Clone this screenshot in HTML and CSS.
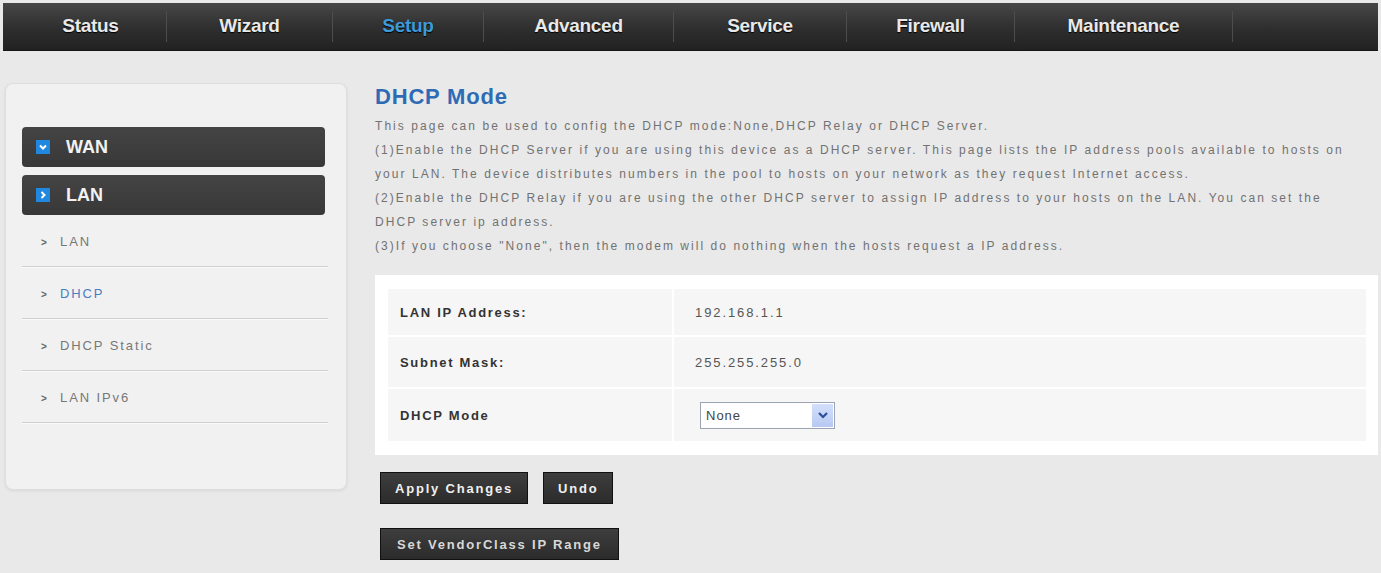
FILE: index.html
```html
<!DOCTYPE html>
<html lang="en">
<head>
    <meta charset="UTF-8">
    <meta name="viewport" content="width=device-width, initial-scale=1.0">
    <title>DHCP Mode</title>
    <link rel="stylesheet" href="styles.css">
</head>
<body>

    <!-- Main menu -->
    <div class="topnav">
        <a class="nav-item">Status</a>
        <a class="nav-item">Wizard</a>
        <a class="nav-item active">Setup</a>
        <a class="nav-item">Advanced</a>
        <a class="nav-item">Service</a>
        <a class="nav-item">Firewall</a>
        <a class="nav-item">Maintenance</a>
    </div>

    <div class="main">

        <!-- Left menu -->
        <div class="sidebar">
            <div class="group-btn">
                <span class="group-icon">
                    <svg width="14" height="14" viewBox="0 0 14 14"><path d="M4 5.5 L7 8.5 L10 5.5" fill="none" stroke="#fff" stroke-width="2"/></svg>
                </span>
                WAN
            </div>
            <div class="group-btn">
                <span class="group-icon">
                    <svg width="14" height="14" viewBox="0 0 14 14"><path d="M5.5 4 L8.5 7 L5.5 10" fill="none" stroke="#fff" stroke-width="2"/></svg>
                </span>
                LAN
            </div>
            <ul class="sub-menu">
                <li><span class="arrow">&gt;</span>LAN</li>
                <li class="current"><span class="arrow">&gt;</span>DHCP</li>
                <li><span class="arrow">&gt;</span>DHCP Static</li>
                <li><span class="arrow">&gt;</span>LAN IPv6</li>
            </ul>
        </div>

        <!-- Page content -->
        <div class="content">
            <h2>DHCP Mode</h2>
            <div class="intro">
                <div>This page can be used to config the DHCP mode:None,DHCP Relay or DHCP Server.</div>
                <div>(1)Enable the DHCP Server if you are using this device as a DHCP server. This page lists the IP address pools available to hosts on your LAN. The device distributes numbers in the pool to hosts on your network as they request Internet access.</div>
                <div>(2)Enable the DHCP Relay if you are using the other DHCP server to assign IP address to your hosts on the LAN. You can set the DHCP server ip address.</div>
                <div>(3)If you choose "None", then the modem will do nothing when the hosts request a IP address.</div>
            </div>

            <div class="form-box">
                <div class="form-table">
                    <div class="cell label">LAN IP Address:</div>
                    <div class="cell value">192.168.1.1</div>
                    <div class="cell label">Subnet Mask:</div>
                    <div class="cell value">255.255.255.0</div>
                    <div class="cell label">DHCP Mode</div>
                    <div class="cell value">
                        <div class="select">
                            <span class="select-text">None</span>
                            <span class="select-btn">
                                <svg width="12" height="10" viewBox="0 0 12 10"><path d="M2 3 L6 7 L10 3" fill="none" stroke="#2b4f9a" stroke-width="2.2"/></svg>
                            </span>
                        </div>
                    </div>
                </div>
            </div>

            <div class="btn-row">
                <button class="btn">Apply Changes</button>
                <button class="btn">Undo</button>
            </div>
            <div class="btn-row second">
                <button class="btn light">Set VendorClass IP Range</button>
            </div>
        </div>
    </div>

</body>
</html>
```

FILE: styles.css
```css
/* General styling */
body {
    margin: 0;
    background-color: #e9e9e9;
    font-family: "Liberation Sans", Arial, sans-serif;
    color: #333;
}

/* Main menu */
.topnav {
    display: grid;
    grid-template-columns: 152px 166px 151px 190px 173px 168px 218px;
    height: 48px;
    margin: 3px 3px 0;
    padding-left: 12px;
    background: linear-gradient(#474747, #2e2e2e 55%, #222);
    border-bottom: 1px solid #161616;
    box-sizing: border-box;
}
.nav-item {
    margin: 8px 0;
    line-height: 30px;
    text-align: center;
    border-right: 1px solid #4d4d4d;
    font-weight: bold;
    font-size: 19px;
    letter-spacing: -0.3px;
    color: #e9e9e9;
    text-shadow: 0 1px 1px #000;
    cursor: pointer;
}
.nav-item.active {
    color: #3d9ad8;
}

.main {
    display: flex;
    padding: 32px 3px 0 5px;
}

/* Left menu */
.sidebar {
    width: 342px;
    height: 407px;
    box-sizing: border-box;
    padding: 43px 18px 0 16px;
    background-color: #f1f1f1;
    border: 1px solid #dedede;
    border-radius: 8px;
    box-shadow: 0 1px 3px rgba(0, 0, 0, 0.08);
}
.group-btn {
    display: flex;
    align-items: center;
    height: 40px;
    margin: 0 3px 8px 0;
    padding-left: 14px;
    background: linear-gradient(#444, #383838);
    border-radius: 4px;
    font-weight: bold;
    font-size: 18px;
    color: #f2f2f2;
}
.group-icon {
    display: flex;
    width: 14px;
    height: 14px;
    margin-right: 16px;
    background-color: #2188df;
}
.sub-menu {
    list-style: none;
    margin: -8px 0 0;
    padding: 0;
}
.sub-menu li {
    height: 49px;
    padding-top: 2px;
    line-height: 49px;
    border-bottom: 1px solid #cfcfcf;
    box-shadow: 0 1px 0 #fafafa;
    font-size: 13px;
    letter-spacing: 1.9px;
    color: #777;
}
.sub-menu li.current {
    color: #4a7cc2;
}
.arrow {
    display: inline-block;
    width: 19px;
    padding-left: 19px;
    font-size: 10px;
    font-weight: bold;
    color: #666;
}

/* Page content */
.content {
    flex: 1;
    margin-left: 28px;
    padding-top: 1px;
}
h2 {
    margin: 0;
    line-height: 26px;
    font-size: 22px;
    letter-spacing: 0.8px;
    color: #2d6cb5;
}
.intro {
    max-width: 983px;
    margin-top: 4px;
    font-size: 12px;
    line-height: 24px;
    letter-spacing: 2.05px;
    color: #727272;
}

/* Settings table */
.form-box {
    margin-top: 17px;
    padding: 14px 12px 14px 13px;
    background-color: #fff;
}
.form-table {
    display: grid;
    grid-template-columns: 284px 1fr;
    grid-template-rows: 46px 50px 52px;
    gap: 2px;
}
.cell {
    display: flex;
    align-items: center;
    background-color: #f6f6f6;
}
.label {
    padding-left: 12px;
    font-weight: bold;
    font-size: 13px;
    letter-spacing: 1.7px;
    color: #333;
}
.value {
    padding-left: 21px;
    font-size: 13px;
    letter-spacing: 1.9px;
    color: #555;
}
.select {
    display: flex;
    align-items: center;
    justify-content: space-between;
    width: 135px;
    height: 27px;
    margin-left: 5px;
    border: 1px solid #9aa4b3;
    background-color: #fff;
    box-sizing: border-box;
    letter-spacing: 1px;
}
.select-text {
    padding-left: 5px;
    color: #444;
}
.select-btn {
    display: flex;
    align-items: center;
    justify-content: center;
    width: 21px;
    height: 23px;
    margin-right: 1px;
    background: linear-gradient(#d3dffb, #b7c9f3);
}

/* Buttons */
.btn-row {
    display: flex;
    gap: 15px;
    margin: 17px 0 0 5px;
}
.btn-row.second {
    margin-top: 24px;
}
.btn {
    height: 32px;
    padding: 0 14px;
    background: linear-gradient(#3e3e3e, #2b2b2b);
    border: 1px solid #111;
    font-family: "Liberation Sans", Arial, sans-serif;
    font-weight: bold;
    font-size: 13px;
    letter-spacing: 1.8px;
    color: #f0f0f0;
    cursor: pointer;
}
.btn.light {
    padding: 0 16px;
    color: #d8d8d8;
}
```
